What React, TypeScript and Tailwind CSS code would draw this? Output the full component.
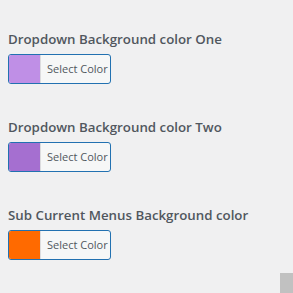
import React from 'react'

const fields = [
  { label: 'Dropdown Background color One', color: '#bf8fe6' },
  { label: 'Dropdown Background color Two', color: '#a56fd0' },
  { label: 'Sub Current Menus Background color', color: '#ff6a00' },
]

function ColorField({ label, color }: { label: string; color: string }) {
  return (
    <div className="flex flex-col gap-[5px]">
      <h3 className="text-[13.3px] font-semibold leading-[20px] text-[#50575e]">{label}</h3>
      <button
        type="button"
        className="flex h-[30px] w-[103px] overflow-hidden rounded-[3px] border border-[#2271b1] bg-[#f6f7f7] p-0"
      >
        <span className="h-full w-[31px] shrink-0" style={{ backgroundColor: color }} />
        <span className="flex h-full flex-1 items-center border-l border-[#dcdcde] pl-[6px] text-[11px] text-[#50575e]">
          Select Color
        </span>
      </button>
    </div>
  )
}

export default function App() {
  return (
    <div
      className="relative h-[293px] w-[293px] overflow-hidden bg-[#f0f0f1]"
      style={{ fontFamily: '"Open Sans", "Noto Sans", sans-serif' }}
    >
      <div className="flex flex-col gap-[33px] px-[8px] pt-[29px]">
        {fields.map((f) => (
          <ColorField key={f.label} {...f} />
        ))}
      </div>
      <div className="absolute bottom-0 right-0 h-[20px] w-[13px] bg-[#c1c1c1]" />
    </div>
  )
}
